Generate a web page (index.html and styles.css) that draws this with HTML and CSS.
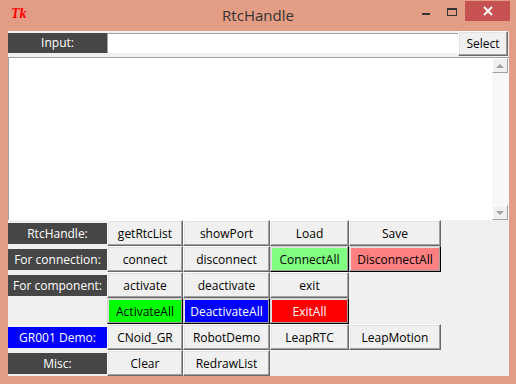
FILE: index.html
```html
<!DOCTYPE html>
<html>
<head>
    <meta charset="UTF-8">
    <title>RtcHandle</title>
    <link rel="stylesheet" href="styles.css">
</head>
<body>
    <div class="window">
        <div class="titlebar">
            <span class="tk-icon">Tk</span>
            <span class="title">RtcHandle</span>
            <div class="controls">
                <span class="ctl min"><i></i></span>
                <span class="ctl max"><i></i></span>
                <span class="ctl close">
                    <svg width="10" height="10" viewBox="0 0 10 10"><path d="M1 1 L9 9 M9 1 L1 9" stroke="#fff" stroke-width="2"/></svg>
                </span>
            </div>
        </div>
        <div class="client">
            <div class="input-row">
                <div class="label">Input:</div>
                <div class="entry"></div>
                <button class="btn select">Select</button>
            </div>
            <div class="text-area">
                <div class="scrollbar">
                    <div class="arrow up"><i></i></div>
                    <div class="track"></div>
                    <div class="arrow down"><i></i></div>
                </div>
            </div>
            <div class="grid">
                <div class="label">RtcHandle:</div>
                <button class="btn">getRtcList</button>
                <button class="btn">showPort</button>
                <button class="btn">Load</button>
                <button class="btn">Save</button>

                <div class="label">For connection:</div>
                <button class="btn">connect</button>
                <button class="btn">disconnect</button>
                <button class="btn light-green">ConnectAll</button>
                <button class="btn light-red">DisconnectAll</button>

                <div class="label">For component:</div>
                <button class="btn">activate</button>
                <button class="btn">deactivate</button>
                <button class="btn">exit</button>
                <div></div>

                <div></div>
                <button class="btn green">ActivateAll</button>
                <button class="btn blue">DeactivateAll</button>
                <button class="btn red">ExitAll</button>
                <div></div>

                <div class="label label-blue">GR001 Demo:</div>
                <button class="btn">CNoid_GR</button>
                <button class="btn">RobotDemo</button>
                <button class="btn">LeapRTC</button>
                <button class="btn">LeapMotion</button>

                <div class="label">Misc:</div>
                <button class="btn">Clear</button>
                <button class="btn">RedrawList</button>
            </div>
        </div>
    </div>
</body>
</html>
```

FILE: styles.css
```css
body {
    margin: 0;
    padding: 0;
    font-family: "Open Sans", "Noto Sans", sans-serif;
    font-size: 12px;
    background-color: #e39d84;
}
.window {
    width: 516px;
    height: 384px;
    box-sizing: border-box;
    background-color: #e39d84;
}
.titlebar {
    height: 31px;
    display: grid;
    grid-template-columns: 1fr auto 1fr;
    align-items: start;
}
.tk-icon {
    font-family: "Liberation Serif", serif;
    font-style: italic;
    font-weight: bold;
    font-size: 14px;
    color: #ff0000;
    margin: 6px 0 0 11px;
    line-height: 16px;
}
.title {
    font-size: 15px;
    color: #333;
    line-height: 30px;
}
.controls {
    display: flex;
    justify-content: flex-end;
    padding-right: 6px;
}
.ctl {
    width: 26px;
    height: 20px;
    display: flex;
    justify-content: center;
    margin-top: 1px;
}
.min i {
    width: 8px;
    height: 2px;
    background-color: #333;
    margin-top: 12px;
}
.max i {
    width: 8px;
    height: 5px;
    border: 1px solid #333;
    border-top-width: 2px;
    margin-top: 7px;
}
.close {
    width: 45px;
    background-color: #c75050;
    align-items: center;
}
.client {
    width: 501px;
    height: 345px;
    margin-left: 8px;
    background-color: #f0f0f0;
    display: flex;
    flex-direction: column;
}
.input-row {
    display: flex;
    height: 25px;
}
.label {
    width: 99px;
    height: 20px;
    background-color: #464646;
    color: #fff;
    text-align: center;
    line-height: 20px;
}
.input-row .label {
    margin-top: 2px;
}
.entry {
    width: 350px;
    height: 19px;
    margin-top: 2px;
    background-color: #fff;
    border-top: 1px solid #a0a0a0;
    border-left: 1px solid #a0a0a0;
}
.btn {
    font-family: "Open Sans", "Noto Sans", sans-serif;
    font-size: 12px;
    color: #000;
    background-color: #f0f0f0;
    border: 1px solid;
    border-color: #fff #696969 #696969 #fff;
    box-shadow: inset -1px -1px #a0a0a0, inset 1px 1px #e3e3e3;
    padding: 0;
    margin: 0;
}
.select {
    width: 50px;
    height: 25px;
}
.text-area {
    margin-top: 1px;
    height: 163px;
    box-sizing: border-box;
    background-color: #fff;
    border-top: 1px solid #a0a0a0;
    border-left: 1px solid #a0a0a0;
    display: flex;
    justify-content: flex-end;
}
.scrollbar {
    width: 16px;
    margin-right: 1px;
    display: flex;
    flex-direction: column;
}
.arrow {
    height: 15px;
    background-color: #f0f0f0;
    border: 1px solid;
    border-color: #fff #a0a0a0 #a0a0a0 #fff;
    box-sizing: border-box;
    display: flex;
    justify-content: center;
    align-items: center;
}
.arrow i {
    width: 0;
    height: 0;
    border-left: 4px solid transparent;
    border-right: 4px solid transparent;
}
.up i {
    border-bottom: 4px solid #a0a0a0;
}
.down i {
    border-top: 4px solid #a0a0a0;
}
.track {
    flex: 1;
    background-color: #f7f7f7;
}
.grid {
    display: grid;
    grid-template-columns: 99px 76px 87px 79px 92px;
    grid-auto-rows: 26px;
}
.grid .label {
    align-self: center;
    height: 21px;
    line-height: 21px;
}
.label-blue {
    background-color: #0000ff;
}
.light-green {
    background-color: #80ff80;
    border-color: #d0d0d0 #000 #000 #d0d0d0;
}
.light-red {
    background-color: #ff8080;
    border-color: #d0d0d0 #000 #000 #d0d0d0;
}
.green {
    background-color: #00ff00;
    border-color: #d0d0d0 #000 #000 #d0d0d0;
}
.blue {
    background-color: #0000ff;
    color: #fff;
    border-color: #d0d0d0 #000 #000 #d0d0d0;
}
.red {
    background-color: #ff0000;
    color: #fff;
    border-color: #d0d0d0 #000 #000 #d0d0d0;
}
```
